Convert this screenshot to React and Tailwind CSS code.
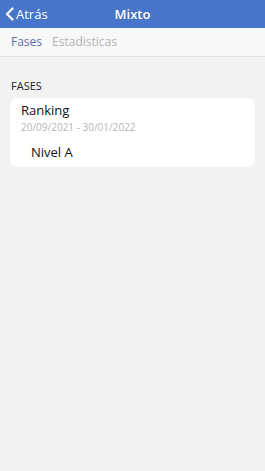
export default function App() {
  return (
    <div className="w-[265px] h-[471px] bg-[#f2f2f2] flex flex-col" style={{ fontFamily: '"Open Sans", "Noto Sans", sans-serif' }}>
      <div className="h-[28px] bg-[#4775c9] flex items-center relative">
        <div className="flex items-center pl-[5px] text-white">
          <svg width="9" height="14" viewBox="0 0 9 14" fill="none">
            <path d="M7.5 1.5 L2 7 L7.5 12.5" stroke="white" strokeWidth="2.2" strokeLinecap="round" strokeLinejoin="round" />
          </svg>
          <span className="ml-[2px] text-[13px] leading-none">Atrás</span>
        </div>
        <div className="absolute inset-0 flex items-center justify-center text-white text-[13px] font-semibold leading-none">Mixto</div>
      </div>
      <div className="h-[29px] bg-[#f8f8f8] border-b border-[#e2e2e2] flex items-center px-[11px] gap-[10px] text-[12px] font-medium">
        <span className="text-[#5b6fae]">Fases</span>
        <span className="text-[#b2b2b2]">Estadisticas</span>
      </div>
      <div className="px-[10px] pt-[23px]">
        <div className="pl-[1px] text-[11px] text-[#222] leading-none font-medium">FASES</div>
        <div className="mt-[7px] bg-white rounded-[7px] h-[69px] pl-[11px] pt-[5px] font-medium flex flex-col">
          <div className="text-[13px] text-[#111] leading-[15px]">Ranking</div>
          <div className="mt-[3px] text-[10px] text-[#b5b5b5] leading-[12px]">20/09/2021 - 30/01/2022</div>
          <div className="mt-[11px] pl-[10px] text-[13px] text-[#111] leading-[16px]">Nivel A</div>
        </div>
      </div>
    </div>
  );
}
